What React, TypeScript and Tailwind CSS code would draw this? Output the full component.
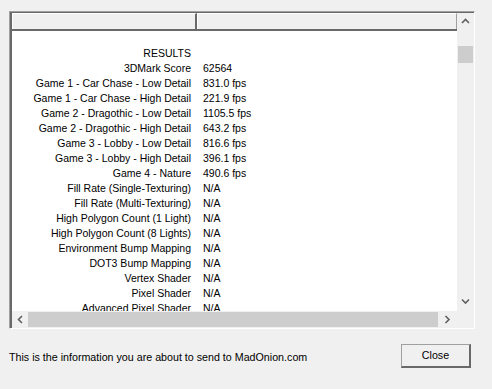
const rows: [string, string][] = [
  ["", ""],
  ["RESULTS", ""],
  ["3DMark Score", "62564"],
  ["Game 1 - Car Chase - Low Detail", "831.0 fps"],
  ["Game 1 - Car Chase - High Detail", "221.9 fps"],
  ["Game 2 - Dragothic - Low Detail", "1105.5 fps"],
  ["Game 2 - Dragothic - High Detail", "643.2 fps"],
  ["Game 3 - Lobby - Low Detail", "816.6 fps"],
  ["Game 3 - Lobby - High Detail", "396.1 fps"],
  ["Game 4 - Nature", "490.6 fps"],
  ["Fill Rate (Single-Texturing)", "N/A"],
  ["Fill Rate (Multi-Texturing)", "N/A"],
  ["High Polygon Count (1 Light)", "N/A"],
  ["High Polygon Count (8 Lights)", "N/A"],
  ["Environment Bump Mapping", "N/A"],
  ["DOT3 Bump Mapping", "N/A"],
  ["Vertex Shader", "N/A"],
  ["Pixel Shader", "N/A"],
  ["Advanced Pixel Shader", "N/A"],
  ["Point Sprites", "N/A"],
];

const Chevron = ({ dir }: { dir: "up" | "down" | "left" | "right" }) => {
  const d = {
    up: "M1 5 L4.5 1.5 L8 5",
    down: "M1 1.5 L4.5 5 L8 1.5",
    left: "M5 1 L1.5 4.5 L5 8",
    right: "M1.5 1 L5 4.5 L1.5 8",
  }[dir];
  const vertical = dir === "up" || dir === "down";
  return (
    <svg width={vertical ? 9 : 7} height={vertical ? 7 : 9} viewBox={vertical ? "0 0 9 7" : "0 0 7 9"}>
      <path d={d} fill="none" stroke="#606060" strokeWidth="1.6" />
    </svg>
  );
};

export default function App() {
  return (
    <div
      className="w-[492px] h-[389px] bg-[#f0f0f0] pt-[11px] pl-[9px] overflow-hidden text-[10.5px] text-black"
      style={{ fontFamily: '"Liberation Sans", Arial, sans-serif' }}
    >
      {/* list view */}
      <div className="w-[466px] h-[318px] border-t border-l border-[#a0a0a0] border-r border-r-white border-b border-b-white flex flex-col">
        <div className="flex-1 flex border-t border-l border-[#696969] border-l-2 min-h-0">
          <div className="w-[445px] flex flex-col">
            {/* header */}
            <div className="h-[18px] flex border-b-2 border-[#696969] shrink-0">
              <div className="w-[185px] bg-[#f0f0f0] border-t border-l border-white border-r-2 border-r-[#696969]" />
              <div className="flex-1 bg-[#f0f0f0] border-t border-l border-white border-r border-r-[#a0a0a0]" />
            </div>
            {/* content */}
            <div className="flex-1 bg-white overflow-hidden">
              {rows.map(([label, value], i) => (
                <div key={i} className="h-[15px] flex leading-[15px] whitespace-nowrap">
                  <div className="w-[179px] text-right shrink-0">{label}</div>
                  <div className="pl-[12px]">{value}</div>
                </div>
              ))}
            </div>
          </div>
          {/* vertical scrollbar */}
          <div className="w-[17px] bg-[#f0f0f0] flex flex-col items-center">
            <div className="h-[17px] flex items-center justify-center">
              <Chevron dir="up" />
            </div>
            <div className="mt-[16px] w-[15px] h-[17px] bg-[#cdcdcd]" />
            <div className="flex-1" />
            <div className="h-[17px] flex items-center justify-center mb-[1px]">
              <Chevron dir="down" />
            </div>
          </div>
        </div>
        {/* horizontal scrollbar */}
        <div className="h-[17px] flex shrink-0 border-l-2 border-[#696969]">
          <div className="w-[445px] flex bg-[#f0f0f0]">
            <div className="w-[16px] flex items-center justify-center">
              <Chevron dir="left" />
            </div>
            <div className="w-[410px] h-[15px] mt-[1px] bg-[#cdcdcd]" />
            <div className="flex-1 flex items-center justify-center">
              <Chevron dir="right" />
            </div>
          </div>
          <div className="flex-1 bg-[#f0f0f0]" />
        </div>
      </div>

      {/* footer */}
      <div className="mt-[15px] pr-[21px] flex items-center justify-between">
        <span className="mt-[3px] text-[10.7px]">This is the information you are about to send to MadOnion.com</span>
        <button className="w-[70px] h-[24px] bg-[#f0f0f0] border border-[#a0a0a0] border-r-[#696969] border-b-[#696969] border-r-2 border-b-2 text-[10.7px] text-black">
          Close
        </button>
      </div>
    </div>
  );
}
